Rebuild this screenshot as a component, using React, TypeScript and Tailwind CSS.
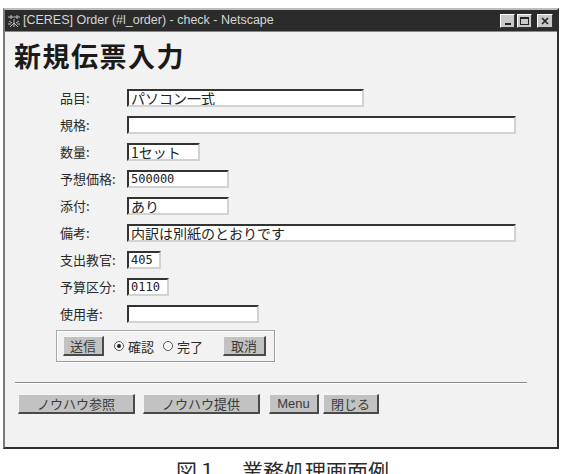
import React from "react";

type Field = { label: string; width: string; value?: string; mono?: boolean };

const fields: Field[] = [
  { label: "品目:", width: "w-[237px]", value: "パソコン一式" },
  { label: "規格:", width: "w-[389px]" },
  { label: "数量:", width: "w-[73px]", value: "1セット" },
  { label: "予想価格:", width: "w-[102px]", value: "500000", mono: true },
  { label: "添付:", width: "w-[102px]", value: "あり" },
  { label: "備考:", width: "w-[389px]", value: "内訳は別紙のとおりです" },
  { label: "支出教官:", width: "w-[34px]", value: "405", mono: true },
  { label: "予算区分:", width: "w-[42px]", value: "0110", mono: true },
  { label: "使用者:", width: "w-[132px]" },
];

const jp = "font-['Noto_Sans_CJK_JP',sans-serif]";

const Button = ({ children, className = "" }: { children: React.ReactNode; className?: string }) => (
  <div
    className={`flex items-center justify-center h-[20px] bg-[#c2c2c2] border-t border-l border-t-[#f4f4f4] border-l-[#f4f4f4] border-b-2 border-r-2 border-b-[#4a4a4a] border-r-[#4a4a4a] text-[13px] leading-none text-[#3a3a3a] ${className}`}
  >
    {children}
  </div>
);

const Radio = ({ checked }: { checked?: boolean }) => (
  <span className="flex items-center justify-center w-[10px] h-[10px] rounded-full border border-[#555] bg-white">
    {checked && <span className="w-[4px] h-[4px] rounded-full bg-[#222]" />}
  </span>
);

const TitleIcon = () => (
  <svg width="14" height="14" viewBox="0 0 14 14" className="shrink-0">
    <g stroke="#bdbdbd" strokeWidth="1" fill="none">
      <path d="M1 3h12M4 1v4M10 1v4" />
      <path d="M2 7l3 2M12 7l-3 2M7 5v8M3 13l4-4 4 4M1 10h3M10 10h3" />
    </g>
  </svg>
);

export default function App() {
  return (
    <div className={`w-[568px] h-[474px] overflow-hidden bg-white ${jp}`}>
      <div className="ml-[3px] mt-[8px] w-[556px] h-[441px] flex flex-col bg-[#f2f2f2] border-t-2 border-t-[#bdbdbd] border-l-2 border-l-[#7a7a7a] border-r-2 border-r-[#2e2e2e] border-b-2 border-b-[#2e2e2e]">
        {/* title bar */}
        <div className="h-[21px] bg-[#2b2b2b] flex items-center pl-[2px] pr-[4px] shrink-0">
          <TitleIcon />
          <span className="ml-[2px] text-[12.5px] leading-none text-[#d6d6d6] font-['Liberation_Sans',sans-serif]">
            [CERES] Order (#l_order) - check - Netscape
          </span>
          <div className="ml-auto flex items-center gap-[2px]">
            <div className="w-[15px] h-[14px] bg-[#c8c8c8] border border-t-white border-l-white border-b-[#333] border-r-[#333] flex items-end justify-center pb-[2px]">
              <span className="w-[6px] h-[2px] bg-[#222]" />
            </div>
            <div className="w-[15px] h-[14px] bg-[#c8c8c8] border border-t-white border-l-white border-b-[#333] border-r-[#333] flex items-center justify-center">
              <span className="w-[9px] h-[8px] border border-[#222] border-t-2" />
            </div>
            <div className="ml-[3px] w-[16px] h-[14px] bg-[#c8c8c8] border border-t-white border-l-white border-b-[#333] border-r-[#333] flex items-center justify-center">
              <svg width="8" height="8" viewBox="0 0 8 8">
                <path d="M1 1l6 6M7 1l-6 6" stroke="#222" strokeWidth="1.6" />
              </svg>
            </div>
          </div>
        </div>

        {/* page body */}
        <div className="flex-1 border-t border-[#888] flex flex-col">
          <h1 className="mt-[10px] ml-[9px] text-[27px] leading-none font-bold tracking-[1.5px] text-[#1a1a1a]">
            新規伝票入力
          </h1>

          <div className="mt-[20px] flex flex-col gap-[10px]">
            {fields.map((f) => (
              <div key={f.label} className="flex items-center h-[17px]">
                <span className="ml-[55px] w-[67px] text-[13px] leading-none text-[#2a2a2a]">{f.label}</span>
                <div
                  className={`${f.width} h-[18px] bg-white border-2 border-t-[#333] border-l-[#333] border-b-[#d2d2d2] border-r-[#d2d2d2] flex items-center pl-[2px] overflow-hidden`}
                >
                  {f.value && (
                    <span
                      className={
                        f.mono
                          ? "text-[12px] leading-none text-[#222] font-['DejaVu_Sans_Mono',monospace]"
                          : "text-[14px] leading-none text-[#222] whitespace-nowrap"
                      }
                    >
                      {f.value}
                    </span>
                  )}
                </div>
              </div>
            ))}
          </div>

          {/* submit group */}
          <div className="mt-[8px] ml-[51px] w-[219px] h-[32px] border border-t-[#a8a8a8] border-l-[#a8a8a8] border-b-[#9a9a9a] border-r-[#9a9a9a] shadow-[inset_1px_1px_0_#fff,1px_1px_0_#fff] flex items-center pl-[6px] pr-[8px]">
            <Button className="w-[41px]">送信</Button>
            <span className="ml-[10px]">
              <Radio checked />
            </span>
            <span className="ml-[4px] text-[13px] leading-none text-[#2a2a2a]">確認</span>
            <span className="ml-[9px]">
              <Radio />
            </span>
            <span className="ml-[4px] text-[13px] leading-none text-[#2a2a2a]">完了</span>
            <Button className="ml-auto w-[43px]">取消</Button>
          </div>

          <div className="mt-[20px] ml-[10px] w-[512px] h-[2px] border-t border-[#8a8a8a] border-b border-b-white" />

          <div className="mt-[10px] ml-[13px] flex items-center">
            <Button className="w-[117px]">ノウハウ参照</Button>
            <Button className="ml-[8px] w-[117px]">ノウハウ提供</Button>
            <Button className="ml-[9px] w-[50px] font-['Liberation_Sans',sans-serif] text-[12px]">Menu</Button>
            <Button className="ml-[4px] w-[56px]">閉じる</Button>
          </div>
        </div>
      </div>

      <p className="mt-[11px] ml-[176px] text-[21px] leading-none text-[#2a2a2a] whitespace-nowrap">
        図１<span className="ml-[24px]">業務処理画面例</span>
      </p>
    </div>
  );
}
